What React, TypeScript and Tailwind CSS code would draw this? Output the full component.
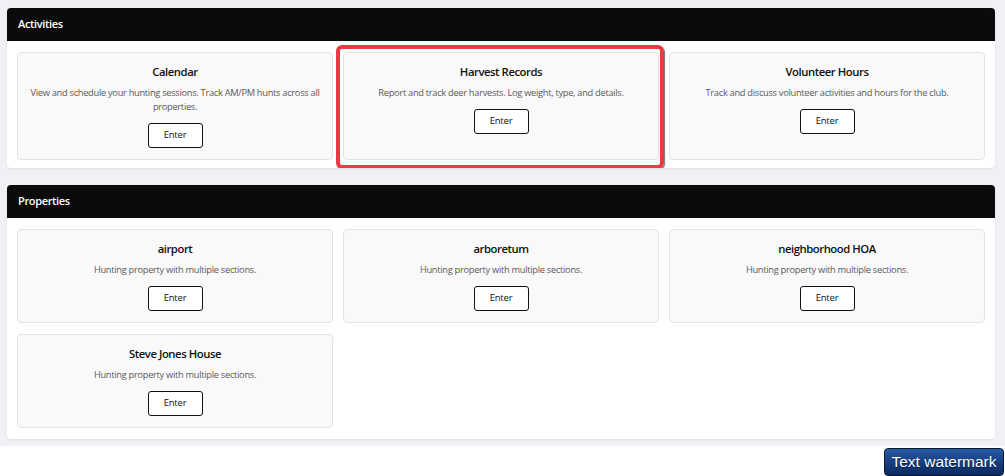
import React from "react";

type Item = { title: string; desc: string; highlight?: boolean };

const activities: Item[] = [
  { title: "Calendar", desc: "View and schedule your hunting sessions. Track AM/PM hunts across all properties." },
  { title: "Harvest Records", desc: "Report and track deer harvests. Log weight, type, and details.", highlight: true },
  { title: "Volunteer Hours", desc: "Track and discuss volunteer activities and hours for the club." },
];

const properties: Item[] = [
  { title: "airport", desc: "Hunting property with multiple sections." },
  { title: "arboretum", desc: "Hunting property with multiple sections." },
  { title: "neighborhood HOA", desc: "Hunting property with multiple sections." },
  { title: "Steve Jones House", desc: "Hunting property with multiple sections." },
];

function Card({ item }: { item: Item }) {
  return (
    <div className="relative">
      {item.highlight && (
        <div className="absolute left-[-7px] top-[-7px] right-[-5px] bottom-[-9px] rounded-[6px] border-[4px] border-[#ea3a3f] shadow-[1px_1px_1px_rgba(0,0,0,0.55)] pointer-events-none" />
      )}
      <div className="h-full rounded-[4px] border border-[#e3e3e3] bg-[#f9f9f9] px-[12px] pt-[11px] pb-[11px] flex flex-col items-center text-center">
        <div className="text-[11.3px] leading-[16px] font-semibold tracking-[-0.45px] text-[#111]">{item.title}</div>
        <div className="mt-[6px] text-[9.3px] leading-[14px] tracking-[-0.3px] text-[#5a5a5a]">{item.desc}</div>
        <button className="mt-[9px] w-[55px] h-[25px] rounded-[3px] border border-[#111] bg-white text-[9.5px] tracking-[-0.2px] text-[#111] font-medium">
          Enter
        </button>
      </div>
    </div>
  );
}

function Section({ title, items, grid }: { title: string; items: Item[]; grid: string }) {
  return (
    <div className="w-[988px] rounded-[4px] bg-white shadow-[0_1px_2px_rgba(0,0,0,0.08)] overflow-hidden">
      <div className="h-[33px] bg-[#0b0b0b] px-[11px] flex items-center text-white font-semibold text-[11px] tracking-[-0.35px]">
        {title}
      </div>
      <div className={grid}>
        {items.map((it) => (
          <Card key={it.title} item={it} />
        ))}
      </div>
    </div>
  );
}

export default function App() {
  return (
    <div className="relative w-[1005px] h-[476px] bg-white overflow-hidden" style={{ fontFamily: '"Open Sans", "Noto Sans", sans-serif' }}>
      <div className="bg-[#f0f1f4] pl-[7px] pt-[8px] pb-[7px] flex flex-col gap-[17px]">
        <Section
          title="Activities"
          items={activities}
          grid="grid grid-cols-3 gap-x-[10px] gap-y-[10px] px-[10px] pt-[11px] pb-[8px]"
        />
        <Section
          title="Properties"
          items={properties}
          grid="grid grid-cols-3 gap-x-[10px] gap-y-[11px] px-[10px] pt-[11px] pb-[11px]"
        />
      </div>
      <div
        className="absolute left-[884px] top-[448px] w-[120px] h-[28px] rounded-[4px] border border-[#0a1838] bg-gradient-to-b from-[#2a5aa6] via-[#163f82] to-[#0c2a60] flex items-center justify-center text-white text-[15.5px] [text-shadow:0_1px_1px_rgba(0,0,0,0.6)]"
        style={{ fontFamily: '"Liberation Sans", Arial, sans-serif' }}
      >
        Text watermark
      </div>
    </div>
  );
}
